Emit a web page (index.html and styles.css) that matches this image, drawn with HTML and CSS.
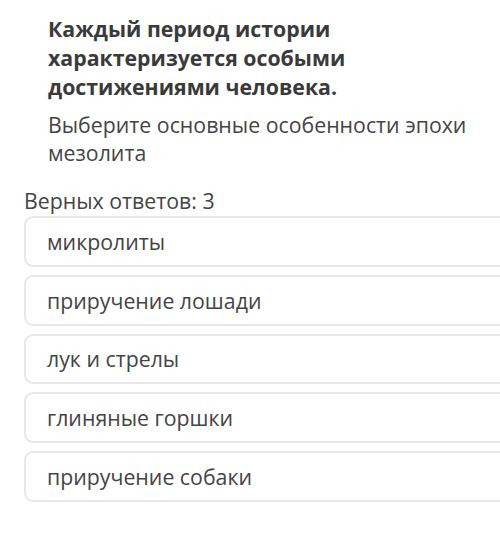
FILE: index.html
```html
<!DOCTYPE html>
<html lang="ru">
<head>
<meta charset="utf-8">
<link rel="stylesheet" href="styles.css">
</head>
<body>
<div class="page">
  <div class="question">
    <h1 class="title">Каждый период истории характеризуется особыми достижениями человека.</h1>
    <p class="subtitle">Выберите основные особенности эпохи мезолита</p>
  </div>
  <div class="count">Верных ответов: 3</div>
  <ul class="options">
    <li class="option">микролиты</li>
    <li class="option">приручение лошади</li>
    <li class="option">лук и стрелы</li>
    <li class="option">глиняные горшки</li>
    <li class="option">приручение собаки</li>
  </ul>
</div>
</body>
</html>
```
FILE: styles.css
```css
html, body {
  margin: 0;
  padding: 0;
  background: #ffffff;
}
body {
  font-family: "Open Sans", "Noto Sans", sans-serif;
  color: #444;
}
.page {
  width: 500px;
  height: 534px;
  overflow: hidden;
  padding-left: 24px;
  box-sizing: border-box;
}
.question {
  padding: 14px 10px 0 24px;
}
.title {
  margin: 0;
  font-size: 21.3px;
  line-height: 29px;
  font-weight: 700;
  color: #3a3a3a;
  width: 340px;
}
.subtitle {
  margin: 10px 0 0;
  font-size: 21.3px;
  line-height: 28px;
  color: #444;
}
.count {
  margin-top: 22px;
  font-size: 21.3px;
  line-height: 24px;
  color: #444;
}
.options {
  list-style: none;
  margin: 3px 0 0;
  padding: 0;
  display: flex;
  flex-direction: column;
  gap: 8px;
  width: 500px;
}
.option {
  height: 50.75px;
  box-sizing: border-box;
  border: 2px solid #e8e8e8;
  border-radius: 9px;
  background: #fff;
  padding-left: 21px;
  display: flex;
  align-items: center;
  font-size: 21.3px;
  color: #444;
}
```
